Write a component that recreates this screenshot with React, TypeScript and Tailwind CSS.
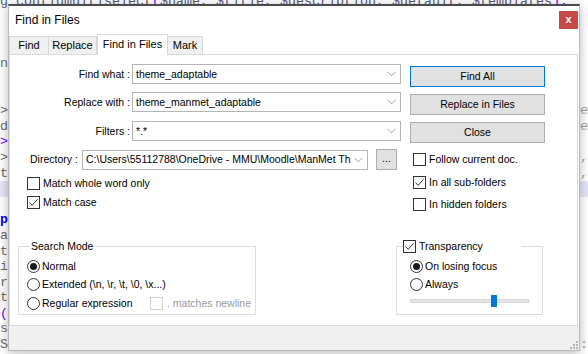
import React from 'react';

const code = "font-['Liberation_Mono','Courier_New',monospace]";
const ui = "font-['Liberation_Sans',Arial,sans-serif]";

// visible fragments of the editor behind the dialog
const lines: { l: string; r?: string; lc?: string; hl?: boolean }[] = [
    { l: '' },
    { l: '' },
    { l: '' },
    { l: '' },
    { l: 'n' },
    { l: '' },
    { l: '' },
    { l: '>', r: 'e' },
    { l: 'd', r: 'e' },
    { l: '>', lc: 'text-[#8000ff]' },
    { l: '>', r: ',t' },
    { l: 't', r: ',t' },
    { l: '', hl: true },
    { l: '' },
    { l: 'p', lc: 'text-[#0000ff] font-bold' },
    { l: 'a' },
    { l: 't' },
    { l: 'i' },
    { l: 'r' },
    { l: 't' },
    { l: '(', lc: 'text-[#8000ff]' },
    { l: 's' },
    { l: 'S', r: ':' },
];

function Editor() {
    return (
        <div className={`${code} text-[13.33px] leading-[15.6px] text-[#6e6e6e] -mt-[6px]`}>
            <div className="h-[15.6px] whitespace-nowrap text-[#58587a]">
                g_configmultiselect<span className="text-[#8000ff]">(</span>$name, $title, $description, $default, $templates<span className="text-[#8000ff]">);</span>
            </div>
            {lines.slice(1).map((ln, i) => (
                <div
                    key={i}
                    className={`h-[15.6px] flex justify-between whitespace-nowrap ${ln.hl ? 'bg-[#e6e6fa]' : ''}`}
                >
                    <span className={ln.lc ?? ''}>{ln.l}</span>
                    <span className="w-[8px] overflow-hidden text-[#a0a0a0]">{ln.r ?? ''}</span>
                </div>
            ))}
        </div>
    );
}

function Check({ checked, disabled }: { checked?: boolean; disabled?: boolean }) {
    return (
        <span
            className={`w-[13px] h-[13px] shrink-0 border bg-white flex items-center justify-center ${
                disabled ? 'border-[#cfcfcf]' : 'border-[#333333]'
            }`}
        >
            {checked && (
                <svg width="11" height="11" viewBox="0 0 11 11">
                    <path d="M1.5 5.5 L4.2 8.3 L9.6 2.3" fill="none" stroke="#333" strokeWidth="1" />
                </svg>
            )}
        </span>
    );
}

function Radio({ checked }: { checked?: boolean }) {
    return (
        <span className="w-[13px] h-[13px] shrink-0 rounded-full border border-[#333333] bg-white flex items-center justify-center">
            {checked && <span className="w-[7px] h-[7px] rounded-full bg-[#1a1a1a]" />}
        </span>
    );
}

function Chevron() {
    return (
        <svg width="9" height="6" viewBox="0 0 9 6" className="shrink-0">
            <polyline points="0.5,0.8 4.5,4.8 8.5,0.8" fill="none" stroke="#8a8a8a" strokeWidth="0.8" />
        </svg>
    );
}

function Combo({ value, w }: { value: string; w: string }) {
    return (
        <div className={`${w} h-[20px] border border-[#b4b4b4] bg-white flex items-center pl-[3px] pr-[4px]`}>
            <span className="flex-1 overflow-hidden whitespace-nowrap">{value}</span>
            <Chevron />
        </div>
    );
}

function Btn({ label, focus }: { label: string; focus?: boolean }) {
    return (
        <div
            className={`w-[135px] h-[21px] bg-[#e1e1e1] border flex items-center justify-center ${
                focus ? 'border-[#0078d7]' : 'border-[#adadad]'
            }`}
        >
            {label}
        </div>
    );
}

function Tab({ label, active, w }: { label: string; active?: boolean; w: string }) {
    return active ? (
        <div className={`${w} h-[21px] -mb-px relative z-10 bg-white border border-b-0 border-[#d9d9d9] flex items-center justify-center pb-[2px]`}>
            {label}
        </div>
    ) : (
        <div className={`${w} h-[18px] bg-[#f0f0f0] border border-b-0 border-[#d9d9d9] -ml-px first:ml-0 flex items-center justify-center`}>
            {label}
        </div>
    );
}

function Dialog() {
    return (
        <div
            className={`${ui} absolute left-[8px] top-[4px] w-[572px] bg-white border border-[#b9b9b9] border-t-2 border-t-[#4b4b4b] shadow-[0_2px_10px_rgba(0,0,0,0.28)] text-[10.5px] leading-[13px] text-black flex flex-col`}
        >
            {/* title bar */}
            <div className="h-[28px] flex items-center justify-between pl-[6px] pr-[1px]">
                <span className="text-[12px]">Find in Files</span>
                <div className="w-[19px] h-[18px] bg-[#c84848] text-white text-[11px] font-bold flex items-center justify-center pb-[2px]">
                    x
                </div>
            </div>

            {/* tabs */}
            <div className="h-[20px] flex items-end text-[11px]">
                <Tab label="Find" w="w-[40px]" />
                <Tab label="Replace" w="w-[49px]" />
                <Tab label="Find in Files" w="w-[71px]" active />
                <Tab label="Mark" w="w-[36px]" />
            </div>

            {/* panel */}
            <div className="h-[272px] mr-[1px] border border-[#d9d9d9] bg-white flex flex-col">
                <div className="flex pt-[9px]">
                    {/* left column */}
                    <div className="pl-[10px] flex flex-col">
                        <div className="flex items-center">
                            <span className="w-[110px] text-right">Find what :</span>
                            <div className="ml-[2px]"><Combo value="theme_adaptable" w="w-[269px]" /></div>
                        </div>
                        <div className="flex items-center mt-[8px]">
                            <span className="w-[110px] text-right">Replace with :</span>
                            <div className="ml-[2px]"><Combo value="theme_manmet_adaptable" w="w-[269px]" /></div>
                        </div>
                        <div className="flex items-center mt-[9px]">
                            <span className="w-[110px] text-right">Filters :</span>
                            <div className="ml-[2px]"><Combo value="*.*" w="w-[269px]" /></div>
                        </div>
                        <div className="flex items-center mt-[8px] pl-[10px]">
                            <span className="w-[52px]">Directory :</span>
                            <Combo value="C:\Users\55112788\OneDrive - MMU\Moodle\ManMet Th" w="w-[286px]" />
                            <div className="ml-[8px] w-[21px] h-[21px] bg-[#e1e1e1] border border-[#adadad] flex items-center justify-center pb-[3px]">
                                ...
                            </div>
                        </div>
                        <div className="flex items-center gap-[3px] pl-[7px] mt-[7px]">
                            <Check />
                            <span>Match whole word only</span>
                        </div>
                        <div className="flex items-center gap-[3px] pl-[7px] mt-[6px]">
                            <Check checked />
                            <span>Match case</span>
                        </div>
                    </div>

                    {/* right column */}
                    <div className="ml-[9px] pt-[2px] flex flex-col">
                        <Btn label="Find All" focus />
                        <div className="mt-[7px]"><Btn label="Replace in Files" /></div>
                        <div className="mt-[7px]"><Btn label="Close" /></div>
                        <div className="flex items-center gap-[3px] pl-[3px] mt-[10px]">
                            <Check />
                            <span>Follow current doc.</span>
                        </div>
                        <div className="flex items-center gap-[3px] pl-[3px] mt-[10px]">
                            <Check checked />
                            <span>In all sub-folders</span>
                        </div>
                        <div className="flex items-center gap-[3px] pl-[3px] mt-[9px]">
                            <Check />
                            <span>In hidden folders</span>
                        </div>
                    </div>
                </div>

                {/* bottom groups */}
                <div className="flex items-start mt-[29px] pl-[8px]">
                    <fieldset className="w-[238px] border border-[#dcdcdc] pl-[8px] pb-[4px]">
                        <legend className="ml-[3px] px-[1px] leading-[13px]">Search Mode</legend>
                        <div className="flex items-center gap-[2px] mt-[7px]">
                            <Radio checked />
                            <span>Normal</span>
                        </div>
                        <div className="flex items-center gap-[2px] mt-[5px]">
                            <Radio />
                            <span>Extended (\n, \r, \t, \0, \x...)</span>
                        </div>
                        <div className="flex items-center gap-[2px] mt-[6px]">
                            <Radio />
                            <span className="w-[106px]">Regular expression</span>
                            <Check disabled />
                            <span className="ml-[2px] text-[#9a9a9a]">. matches newline</span>
                        </div>
                    </fieldset>

                    <fieldset className="ml-[140px] w-[147px] border border-[#dcdcdc] pl-[13px] pb-[7px]">
                        <legend className="-ml-[7px] w-[118px] leading-[13px] flex items-center gap-[3px]">
                            <Check checked />
                            <span>Transparency</span>
                        </legend>
                        <div className="flex items-center gap-[2px] mt-[7px]">
                            <Radio checked />
                            <span>On losing focus</span>
                        </div>
                        <div className="flex items-center gap-[2px] mt-[5px]">
                            <Radio />
                            <span>Always</span>
                        </div>
                        <div className="relative w-[119px] h-[12px] mt-[4px] flex items-center">
                            <div className="w-full h-[4px] bg-[#e7e7e7] border border-[#d6d6d6]" />
                            <div className="absolute left-[81px] top-0 w-[6px] h-[12px] bg-[#0078d7]" />
                        </div>
                    </fieldset>
                </div>
            </div>

            {/* footer */}
            <div className="h-[24px] bg-[#f0f0f0] flex items-end justify-end pr-[1px] pb-[1px]">
                <svg width="9" height="9" viewBox="0 0 9 9">
                    <rect x="7" y="1" width="2" height="2" fill="#b5b5b5" />
                    <rect x="4" y="4" width="2" height="2" fill="#b5b5b5" />
                    <rect x="7" y="4" width="2" height="2" fill="#b5b5b5" />
                    <rect x="1" y="7" width="2" height="2" fill="#b5b5b5" />
                    <rect x="4" y="7" width="2" height="2" fill="#b5b5b5" />
                    <rect x="7" y="7" width="2" height="2" fill="#b5b5b5" />
                </svg>
            </div>
        </div>
    );
}

export default function App() {
    return (
        <div className="relative w-[588px] h-[354px] overflow-hidden bg-white">
            <Editor />
            <Dialog />
        </div>
    );
}
